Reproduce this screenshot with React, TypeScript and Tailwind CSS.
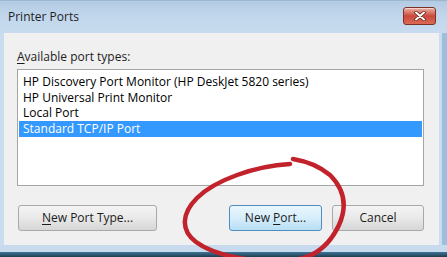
import React from "react"

const ports = [
  "HP Discovery Port Monitor (HP DeskJet 5820 series)",
  "HP Universal Print Monitor",
  "Local Port",
  "Standard TCP/IP Port",
]

function CloseButton() {
  return (
    <div className="w-[33px] h-[18px] mr-[11px] mb-[2px] rounded-[3px] border border-[#7a3128] bg-gradient-to-b from-[#eab0a4] via-[#c9493b] to-[#dc6a55] flex items-center justify-center shadow-[inset_0_1px_0_rgba(255,255,255,0.5)]">
      <svg width="12" height="10" viewBox="0 0 12 10">
        <path d="M2 1.5 L10 8.5 M10 1.5 L2 8.5" stroke="#5a1d16" strokeWidth="3.4" strokeLinecap="round" />
        <path d="M2 1.5 L10 8.5 M10 1.5 L2 8.5" stroke="#ffffff" strokeWidth="2" strokeLinecap="round" />
      </svg>
    </div>
  )
}

function Button({ children, primary, width }: { children: React.ReactNode; primary?: boolean; width: string }) {
  return (
    <div
      className={`${width} h-[26px] rounded-[3px] border flex items-center justify-center text-[12px] text-[#1c1c1c] ${
        primary
          ? "border-[#4f8cc0] bg-gradient-to-b from-[#eaf6fd] via-[#d6eefb] to-[#b8def5]"
          : "border-[#a9a9a9] bg-gradient-to-b from-[#f4f4f4] via-[#e9e9e9] to-[#d6d6d6]"
      }`}
    >
      {children}
    </div>
  )
}

export default function App() {
  return (
    <div className="relative w-[447px] h-[257px] overflow-hidden flex flex-col bg-[#c5d9ed] font-['Open_Sans',sans-serif]">
      {/* barra de título */}
      <div className="h-[33px] flex items-center justify-between bg-gradient-to-b from-[#b3cbe3] via-[#c2d7ec] to-[#c8dbef] border-t border-[#9db6cf]">
        <span className="pl-[8px] text-[12px] text-[#1e1e1e]">Printer Ports</span>
        <CloseButton />
      </div>

      <div className="flex flex-1">
        <div className="w-[4px] bg-[#cadcef]" />
        {/* área do cliente */}
        <div className="flex-1 bg-[#f0f0f0] flex flex-col pl-[13px] pr-[15px] pt-[16px]">
          <div className="h-[16px] leading-[16px] text-[12px] text-[#1c1c1c]">
            <span className="underline underline-offset-2">A</span>vailable port types:
          </div>
          <div className="mt-[4px] h-[117px] bg-white border border-[#a5a5a5] pt-[4px] px-[1px]">
            {ports.map((p, i) => (
              <div
                key={p}
                className={`h-[15.7px] leading-[15.7px] pl-[4px] text-[12px] ${
                  i === 3 ? "bg-[#3399ff] text-white" : "text-black"
                }`}
              >
                {p}
              </div>
            ))}
          </div>
          <div className="mt-[19px] flex pl-[1px]">
            <Button width="w-[139px]">
              <span><span className="underline underline-offset-2">N</span>ew Port Type...</span>
            </Button>
            <div className="flex-1" />
            <Button width="w-[93px]" primary>
              <span>New <span className="underline underline-offset-2">P</span>ort...</span>
            </Button>
            <div className="w-[10px]" />
            <Button width="w-[92px]">Cancel</Button>
          </div>
        </div>
        <div className="w-[3px] bg-[#cadcef]" />
        <div className="w-[5px] bg-[#9fbedb]" />
      </div>
      <div className="h-[7px] bg-[#c8dbee]" />
      <div className="h-[5px] bg-gradient-to-b from-[#3f7596] to-[#1f3d52]" />

      {/* círculo vermelho desenhado à mão */}
      <svg className="absolute inset-0 pointer-events-none" width="447" height="257" viewBox="0 0 447 257">
        <path
          d="M290 164 C255 166 215 180 197 198 C182 213 180 230 196 242 C215 256 255 264 295 260 C320 256 332 240 339 225 C348 205 343 188 330 175 C318 165 305 161 293 159"
          fill="none"
          stroke="#c1222b"
          strokeWidth="4.5"
          strokeLinecap="round"
        />
      </svg>
    </div>
  )
}
